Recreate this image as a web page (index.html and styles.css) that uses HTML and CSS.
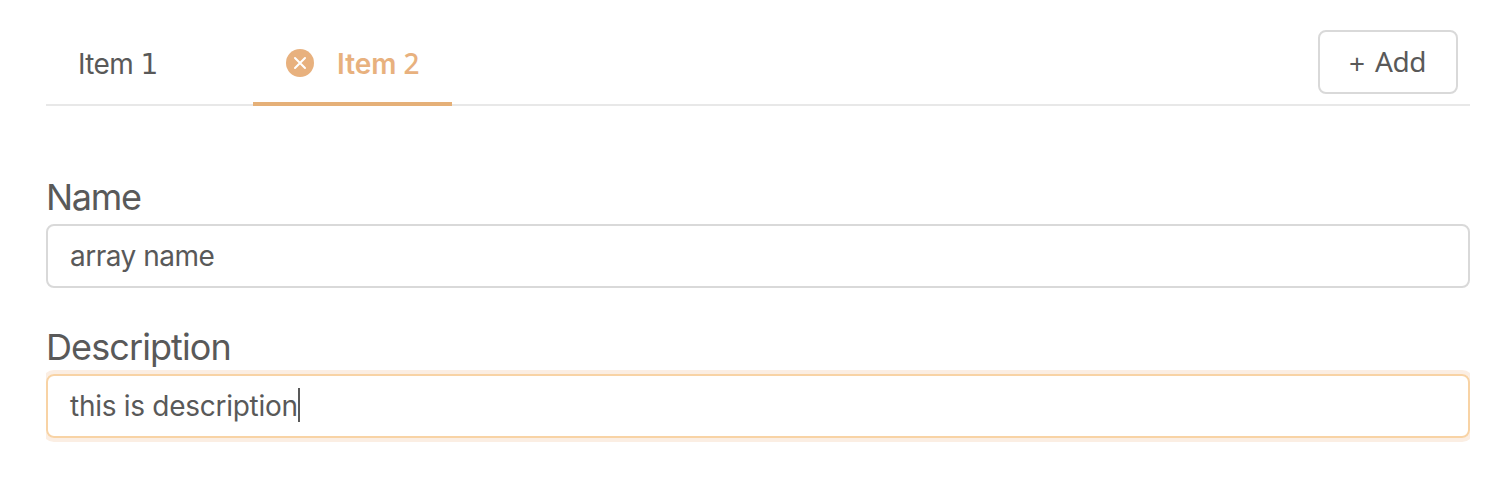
FILE: index.html
```html
<!DOCTYPE html>
<html lang="en">
<head>
<meta charset="utf-8">
<title>Items</title>
<link rel="stylesheet" href="styles.css">
</head>
<body>
<main class="panel">
  <nav class="tabs">
    <div class="tab tab-first"><span class="tab-text">Item <span class="digit">1</span></span></div>
    <div class="tab tab-active">
      <svg class="close" viewBox="0 0 28 28"><circle cx="14" cy="14" r="14" fill="#e8b17e"/><path d="M9 9L19 19M19 9L9 19" stroke="#fff" stroke-width="2" stroke-linecap="round"/></svg>
      <span class="tab-text">Item <span class="digit">2</span></span>
    </div>
    <button class="add"><span class="plus">+</span><span class="add-text">Add</span></button>
  </nav>
  <section class="field">
    <div class="label name-label">Name</div>
    <div class="input"><span class="name-value">array name</span></div>
  </section>
  <section class="field">
    <div class="label description-label">Description</div>
    <div class="input focused"><span class="description-value">this is description</span><span class="caret"></span></div>
  </section>
</main>
</body>
</html>
```
FILE: styles.css
```css
* { box-sizing: border-box; }
body {
  margin: 0;
  background: #fff;
  color: #595959;
  font: 28px/42px Inter, "Liberation Sans", sans-serif;
}
.panel { width: 1424px; margin: 0 auto 0 46px; padding-bottom: 20px; overflow-x: clip; }
.tabs {
  display: flex;
  height: 106px;
  padding-top: 22px;
  border-bottom: 2px solid #e8e8e8;
}
.tab {
  display: flex;
  align-items: center;
  height: 84px;
  padding: 0 32px;
}
.tab-first {
  width: 143px;
  margin-right: 64px;
  border-bottom: 4px solid transparent;
  letter-spacing: -0.6px;
}
.tab-active {
  width: 199px;
  color: #e8b17e;
  font-weight: 600;
  border-bottom: 4px solid #e5b078;
}
.tab-text { white-space: pre; padding-top: 2px; }
.tab-first .tab-text { padding-top: 4px; }
.digit { font-family: "Noto Sans", sans-serif; }
.tab-first .digit { font-family: "DejaVu Sans", sans-serif; }
.tab-active .digit { font-weight: 500; }
.close { flex: none; width: 28px; height: 28px; margin: 2px 23.5px 0 0.5px; }
.add {
  display: flex;
  align-items: center;
  width: 140px;
  height: 64px;
  margin: 8px 12px 0 auto;
  padding: 0 0 0 29px;
  border: 2px solid #d9d9d9;
  border-radius: 8px;
  background: #fff;
  color: #595959;
  font: 28px/42px "Noto Sans", sans-serif;
}
.plus { width: 26px; text-align: left; padding-top: 2px; }
.add-text { margin-top: -2px; letter-spacing: -0.4px; }
.field { padding-top: 68px; }
.field + .field { padding-top: 36px; }
.label { height: 50px; font-size: 36px; line-height: 46px; }
.name-label { letter-spacing: -1.3px; }
.description-label { letter-spacing: -0.9px; }
.name-value { letter-spacing: -0.5px; }
.description-value { letter-spacing: -0.28px; }
.input {
  display: flex;
  align-items: center;
  height: 64px;
  padding: 0 22px;
  border: 2px solid #d9d9d9;
  border-radius: 8px;
}
.focused { border-color: #f8d3a5; box-shadow: 0 0 0 4px #fbeee3; }
.caret { width: 2px; height: 34px; margin-top: -2px; background: #595959; }
```
